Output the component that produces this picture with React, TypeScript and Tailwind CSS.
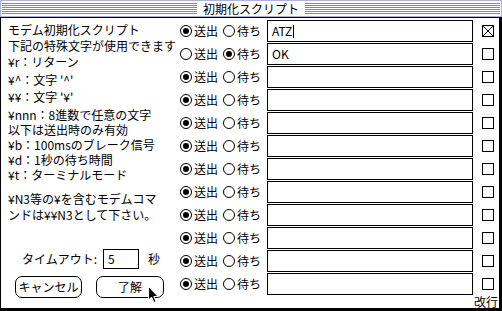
const leftLines: { text: string; mt: string }[] = [
  { text: "モデム初期化スクリプト", mt: "mt-[5px]" },
  { text: "下記の特殊文字が使用できます", mt: "mt-[2px]" },
  { text: "¥r：リターン", mt: "mt-[2px]" },
  { text: "¥^：文字 '^'", mt: "mt-[4px]" },
  { text: "¥¥：文字 '¥'", mt: "mt-[3px]" },
  { text: "¥nnn：8進数で任意の文字", mt: "mt-[4px]" },
  { text: "以下は送出時のみ有効", mt: "mt-[1px]" },
  { text: "¥b：100msのブレーク信号", mt: "mt-[1px]" },
  { text: "¥d：1秒の待ち時間", mt: "mt-[1px]" },
  { text: "¥t：ターミナルモード", mt: "mt-[1px]" },
  { text: "¥N3等の¥を含むモデムコマ", mt: "mt-[10px]" },
  { text: "ンドは¥¥N3として下さい。", mt: "mt-[2px]" },
];

type Row = { send: boolean; text: string; checked: boolean; caret?: boolean };

const rows: Row[] = [
  { send: true, text: "ATZ", checked: true, caret: true },
  { send: false, text: "OK", checked: false },
  ...Array.from({ length: 10 }, () => ({ send: true, text: "", checked: false })),
];

function Radio({ on }: { on: boolean }) {
  return (
    <svg width="12" height="12" viewBox="0 0 12 12" className="shrink-0">
      <circle cx="6" cy="6" r="5.5" fill="white" stroke="black" strokeWidth="1" />
      {on && <circle cx="6" cy="6" r="3" fill="black" />}
    </svg>
  );
}

function Check({ on }: { on: boolean }) {
  return (
    <svg width="12" height="12" viewBox="0 0 12 12" className="shrink-0">
      <rect x="0.5" y="0.5" width="11" height="11" fill="white" stroke="black" strokeWidth="1" />
      {on && <path d="M1 1 L11 11 M11 1 L1 11" stroke="black" strokeWidth="1" />}
    </svg>
  );
}

function Stripes() {
  return (
    <div className="h-[12px] flex-1 bg-[repeating-linear-gradient(to_bottom,#8a8a8a_0px,#8a8a8a_1px,#ffffff_1px,#ffffff_2px)]" />
  );
}

export default function App() {
  return (
    <div className="relative h-[311px] w-[502px] overflow-hidden bg-white font-['Noto_Sans_CJK_JP','Noto_Sans_CJK_SC',sans-serif] text-[12px] text-black">
      {/* title bar */}
      <div className="flex h-[17px] items-center border border-[#b0b0dc] bg-white px-[1px] pt-[1px]">
        <Stripes />
        <div className="flex h-full items-center px-[6px] leading-none">初期化スクリプト</div>
        <Stripes />
      </div>

      {/* body */}
      <div className="flex h-[294px] border-t border-r-[3px] border-b-[3px] border-l border-black">
        {/* left column */}
        <div className="flex w-[179px] shrink-0 flex-col">
          {leftLines.map((l, i) => (
            <div key={i} className={`h-[14px] whitespace-nowrap pl-[7px] leading-[14px] ${l.mt}`}>
              {l.text}
            </div>
          ))}

          <div className="mt-[27px] flex h-[20px] items-center pl-[21px]">
            <span className="w-[81px] whitespace-nowrap">タイムアウト:</span>
            <div className="flex h-[20px] w-[36px] items-center border border-black pl-[4px]">5</div>
            <span className="ml-[9px]">秒</span>
          </div>

          <div className="mt-[7px] flex items-center pl-[14px]">
            <div className="flex h-[22px] w-[67px] items-center justify-center rounded-[7px] border border-black">
              キャンセル
            </div>
            <div className="relative ml-[14px] flex h-[22px] w-[68px] items-center justify-center rounded-[7px] border border-black">
              了解
              <svg
                width="12"
                height="18"
                viewBox="0 0 12 18"
                className="absolute left-[51px] top-[9px]"
              >
                <path
                  d="M0.5 0.5 L0.5 14 L3.5 11 L6 16.5 L8 15.5 L5.8 10.5 L10 10.5 Z"
                  fill="black"
                  stroke="white"
                  strokeWidth="1"
                />
              </svg>
            </div>
          </div>
        </div>

        {/* right column */}
        <div className="flex flex-1 flex-col pt-[2px]">
          {rows.map((r, i) => (
            <div key={i} className="mb-[1px] flex h-[22px] items-center">
              <Radio on={r.send} />
              <span className="ml-[2px] w-[29px] whitespace-nowrap">送出</span>
              <Radio on={!r.send} />
              <span className="ml-[2px] w-[30px] whitespace-nowrap">待ち</span>
              <div className="flex h-[22px] w-[206px] items-center border border-black pl-[4px] leading-none">
                {r.text}
                {r.caret && <span className="ml-[1px] inline-block h-[13px] w-px bg-black" />}
              </div>
              <div className="ml-[9px]">
                <Check on={r.checked} />
              </div>
            </div>
          ))}
          <div className="flex h-[12px] justify-end pr-[1px] text-[12px] leading-[12px]">改行</div>
        </div>
      </div>
    </div>
  );
}
